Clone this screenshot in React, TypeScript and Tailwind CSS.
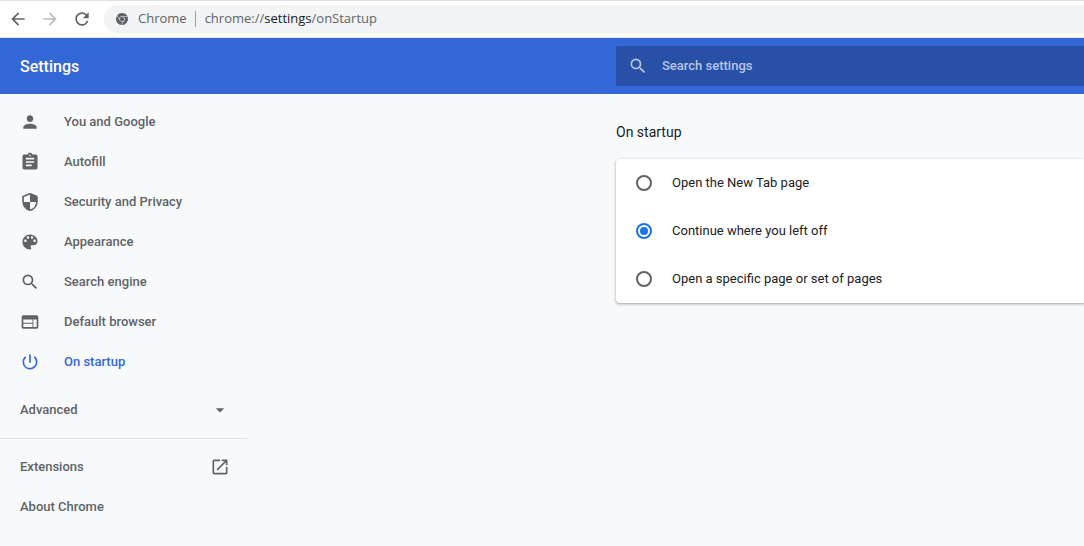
import React, { useState } from 'react';
import {
  MdArrowBack,
  MdArrowDropDown,
  MdArrowForward,
  MdAssignment,
  MdOpenInNew,
  MdPerson,
  MdPowerSettingsNew,
  MdRefresh,
  MdSearch,
  MdWeb,
} from 'react-icons/md';
import { SiGooglechrome } from 'react-icons/si';

type IconProps = { size?: number };

// Shield split in quarters, with a softened outline
function ShieldIcon({ size = 20 }: IconProps) {
  return (
    <svg width={size} height={size} viewBox="0 0 24 24" fill="currentColor" aria-hidden="true">
      <path
        d="M12 2.2 20.3 5.4V11c0 5.2-3.4 9.6-8.3 10.9C7.1 20.600 3.700 16.200 3.700 11V5.400z"
        fill="none"
        stroke="currentColor"
        strokeWidth="2"
        strokeLinejoin="round"
      />
      <path d="M12 2v10h8.300V5.400zM12 12v9.900C7.600 20.700 4.200 17 3.800 12z" />
    </svg>
  );
}

function PaletteIcon({ size = 20 }: IconProps) {
  return (
    <svg width={size} height={size} viewBox="0 0 24 24" fill="currentColor" aria-hidden="true">
      <path d="M12 3c-4.970 0-9 4.030-9 9s4.030 9 9 9c.83 0 1.500-.67 1.500-1.500 0-.39-.15-.74-.39-1.010-.23-.26-.38-.61-.38-.99 0-.83.67-1.500 1.500-1.500H16c2.760 0 5-2.240 5-5 0-4.420-4.030-8-9-8zm-5.500 9c-.83 0-1.500-.67-1.500-1.500S5.670 9 6.500 9 8 9.670 8 10.500 7.330 12 6.500 12zm3-4C8.670 8 8 7.330 8 6.500S8.670 5 9.500 5s1.500.67 1.500 1.500S10.330 8 9.500 8zm5 0c-.83 0-1.500-.67-1.500-1.500S13.670 5 14.500 5s1.500.67 1.500 1.500S15.330 8 14.500 8zm3 4c-.83 0-1.500-.67-1.500-1.500S16.670 9 17.500 9s1.500.67 1.500 1.500-.67 1.500-1.500 1.500z" />
    </svg>
  );
}

const menuItems: { label: string; href: string; icon: React.ComponentType<IconProps> }[] = [
  { label: 'You and Google', href: '#people', icon: MdPerson },
  { label: 'Autofill', href: '#autofill', icon: MdAssignment },
  { label: 'Security and Privacy', href: '#privacy', icon: ShieldIcon },
  { label: 'Appearance', href: '#appearance', icon: PaletteIcon },
  { label: 'Search engine', href: '#search', icon: MdSearch },
  { label: 'Default browser', href: '#defaultBrowser', icon: MdWeb },
  { label: 'On startup', href: '#onStartup', icon: MdPowerSettingsNew },
];

const startupOptions = [
  { value: 'newTab', label: 'Open the New Tab page' },
  { value: 'continue', label: 'Continue where you left off' },
  { value: 'specific', label: 'Open a specific page or set of pages' },
];

function BrowserBar() {
  return (
    <div className="flex h-[38px] items-center border-y border-[#dee1e6] bg-white pl-2 font-['Open_Sans',sans-serif] text-[13px] text-[#5f6368]">
      <div className="flex gap-3">
        <button type="button" aria-label="Back">
          <MdArrowBack size={20} />
        </button>
        <button type="button" aria-label="Forward" className="text-[#babcbe]" disabled>
          <MdArrowForward size={20} />
        </button>
        <button type="button" aria-label="Reload">
          <MdRefresh size={20} />
        </button>
      </div>
      <div className="ml-3 flex h-7 flex-1 items-center rounded-l-full bg-[#f1f3f4] pl-3">
        <SiGooglechrome size={12} />
        <span className="ml-2.5">Chrome</span>
        <span className="mr-[9px] ml-2 h-4 w-px bg-[#9aa0a6]" />
        <span>
          chrome://<span className="text-[#202124]">settings</span>/onStartup
        </span>
      </div>
    </div>
  );
}

function Header() {
  return (
    <header className="grid h-14 grid-cols-[616px_minmax(0,1fr)] items-center bg-[#3367d6]">
      <h1 className="pt-0.5 pl-5 text-base font-medium text-white">Settings</h1>
      <label className="flex h-10 items-center rounded-l-xs bg-[#2850a7] pl-3 text-[#b7c6e6]">
        <MdSearch size={20} />
        <input
          type="search"
          aria-label="Search settings"
          placeholder="Search settings"
          className="ml-3.5 min-w-0 flex-1 bg-transparent font-medium outline-none placeholder:text-[#b7c6e6]"
        />
      </label>
    </header>
  );
}

function Sidebar() {
  return (
    <nav className="w-[247px] pt-2 font-medium text-[#5f6368]">
      {menuItems.map(({ label, href, icon: Icon }) => (
        <a
          key={href}
          href={href}
          className={`flex h-10 items-center gap-6 pl-5 ${
            href === '#onStartup' ? 'text-[#3367d6]' : ''
          }`}
        >
          <Icon size={20} />
          {label}
        </a>
      ))}
      <button
        type="button"
        className="mt-2 flex h-10 w-full items-center justify-between pr-[17px] pl-5"
      >
        Advanced
        <MdArrowDropDown size={20} />
      </button>
      <div className="my-2 border-t border-[#e0e2e5]" />
      <a href="#extensions" className="flex h-10 items-center justify-between pr-[17px] pl-5">
        Extensions
        <MdOpenInNew size={20} />
      </a>
      <a href="#help" className="flex h-10 items-center pl-5">
        About Chrome
      </a>
    </nav>
  );
}

function StartupSection() {
  const [selected, setSelected] = useState('continue');

  return (
    <section className="pt-7">
      <h2 className="text-sm leading-5 text-[#202124]">On startup</h2>
      <div className="mt-[17px] rounded-l-sm bg-white shadow-[0_1px_2px_rgba(60,64,67,0.3),0_1px_3px_1px_rgba(60,64,67,0.15)]">
        {startupOptions.map(({ value, label }) => (
          <label key={value} className="flex h-12 items-center gap-5 pl-5 text-[#202124]">
            <input
              type="radio"
              name="startup"
              value={value}
              checked={selected === value}
              onChange={() => setSelected(value)}
              className="size-4 appearance-none rounded-full border-2 border-[#5f6368] bg-clip-content p-0.5 checked:border-[#1a73e8] checked:bg-[#1a73e8]"
            />
            {label}
          </label>
        ))}
      </div>
    </section>
  );
}

export default function App() {
  return (
    <div className="min-h-screen bg-[#f8f9fa] font-[Roboto,sans-serif] text-[13px]">
      <BrowserBar />
      <Header />
      <main className="grid grid-cols-[616px_minmax(0,1fr)]">
        <Sidebar />
        <StartupSection />
      </main>
    </div>
  );
}
